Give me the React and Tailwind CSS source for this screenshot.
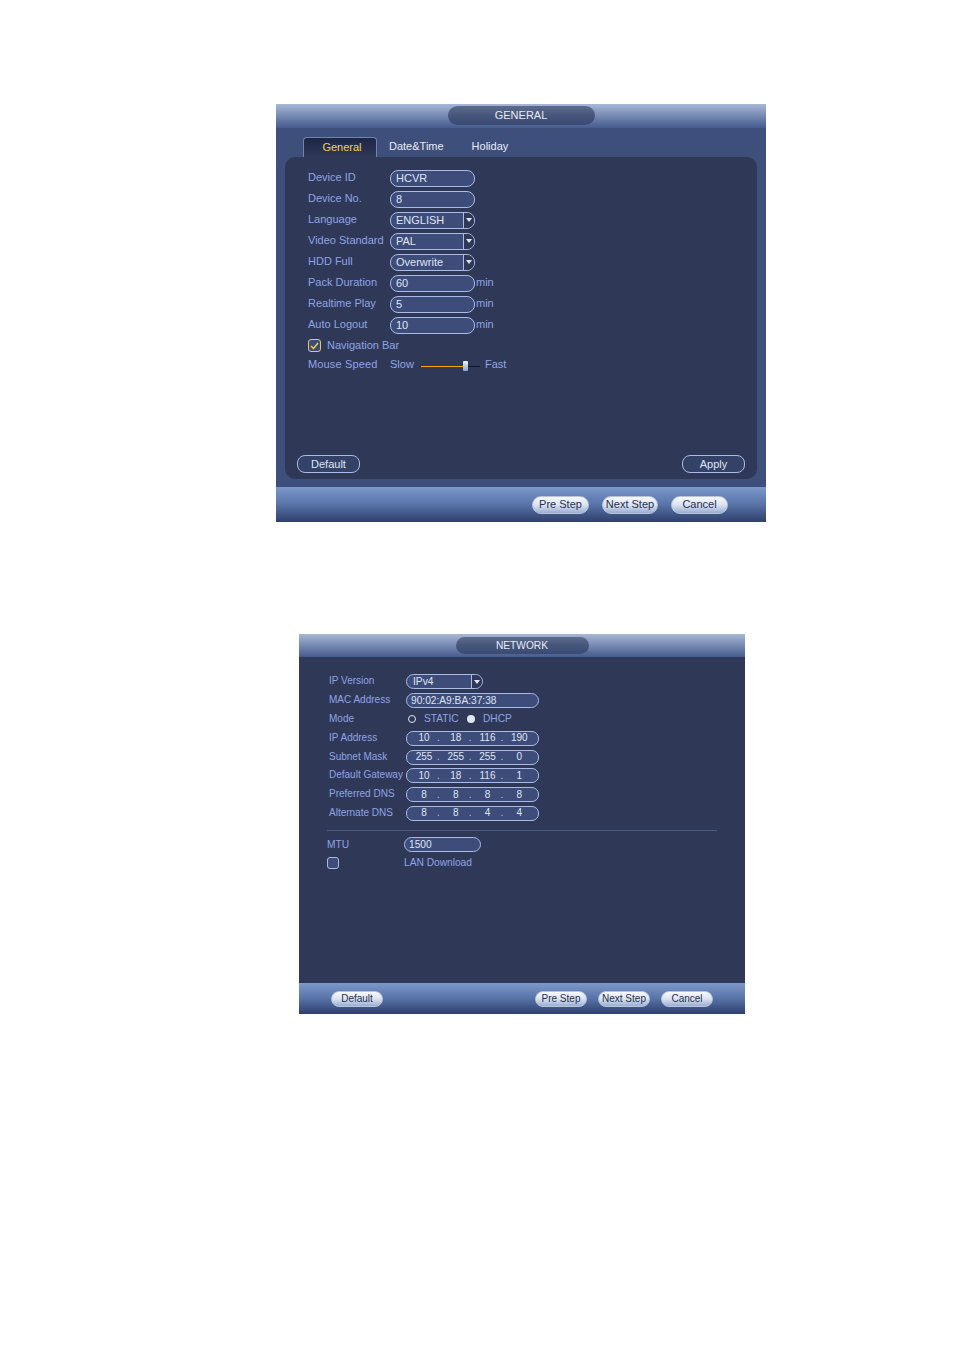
import React from "react";

const font = "font-['Liberation_Sans',Arial,sans-serif] text-[11px] leading-none";
const labelColor = "text-[#8fa3e6]";

// Rounded NVR style text box
const Input = ({ value, width = "w-[85px]", height = "h-[17px]", pad = "pl-[4px]", shift = "mt-[1px]" }) => (
  <div className={`${width} ${height} ${pad} ${shift} flex items-center rounded-[8px] border border-[#a9bbe6] bg-[#3e4c7a] text-[#dfe5f5]`}>
    {value}
  </div>
);

const Select = ({ value, width = "w-[85px]", height = "h-[17px]", pad = "pl-[4px]", shift = "mt-[1px]" }) => (
  <div className={`${width} ${height} ${shift} flex items-center overflow-hidden rounded-[8px] border border-[#a9bbe6] bg-[#3e4c7a] text-[#dfe5f5]`}>
    <span className={`flex-1 ${pad}`}>{value}</span>
    <span className="flex h-full w-[11px] items-center justify-center border-l border-[#a9bbe6] bg-[#2f3957]">
      <svg width="6" height="4" viewBox="0 0 6 4"><path d="M0 0h6L3 4z" fill="#dfe5f5" /></svg>
    </span>
  </div>
);

const IpInput = ({ parts }) => (
  <div className="mt-[1px] flex h-[15px] w-[133px] items-center rounded-[7px] border border-[#a9bbe6] bg-[#3e4c7a] pl-[4px] text-[10px] text-[#dfe5f5]">
    {parts.map((p, i) => (
      <div key={i} className="flex w-[32px] items-center">
        <span className="w-[26px] text-center">{p}</span>
        {i < 3 && <span className="w-[2px] text-center text-[#b9c4e2]">.</span>}
      </div>
    ))}
  </div>
);

const GlossButton = ({ label, width, height = "h-[18px]", size = "text-[11px]" }) => (
  <button className={`${width} ${height} ${size} rounded-full border border-[#b8c4de] bg-gradient-to-b from-[#f8f9fd] via-[#dbe2f0] to-[#9aaed2] text-[#26304f]`}>
    {label}
  </button>
);

const OutlineButton = ({ label }) => (
  <button className="h-[18px] w-[63px] rounded-[8px] border border-[#a9bbe6] bg-[#354268] text-[#dfe5f5]">
    {label}
  </button>
);

const Row = ({ label, children, unit }) => (
  <div className="flex h-[21px] items-center">
    <span className={`w-[82px] ${labelColor}`}>{label}</span>
    {children}
    {unit && <span className={`ml-[1px] ${labelColor}`}>{unit}</span>}
  </div>
);

const NetRow = ({ label, children }) => (
  <div className="flex h-[18.8px] items-center">
    <span className={`w-[77px] whitespace-nowrap text-[10px] ${labelColor}`}>{label}</span>
    {children}
  </div>
);

const TitleBar = ({ title, pillSize, height, top, size }) => (
  <div className={`${height} ${top} flex items-start justify-center bg-gradient-to-b from-[#a8b8d6] to-[#465c8e]`}>
    <div className={`${pillSize} ${size} flex items-center justify-center rounded-full bg-gradient-to-b from-[#5e6c8c] via-[#46557a] to-[#3a4a72] text-[#e6ebf7]`}>
      {title}
    </div>
  </div>
);

const GeneralWindow = () => (
  <div className="ml-[276px] flex h-[418px] w-[490px] flex-col bg-[#3f4f7c]">
    <TitleBar title="GENERAL" pillSize="h-[19px] w-[147px]" height="h-[24px]" top="pt-[2px]" size="text-[11px]" />
    {/* Tabs */}
    <div className="flex h-[29px] items-end pl-[27px]">
      <div className="flex h-[20px] w-[74px] items-center justify-center rounded-t-[4px] border border-b-0 border-[#6f82b0] bg-gradient-to-b from-[#1d2745] to-[#2f3957] pl-[4px] text-[#f3d24a]">
        General
      </div>
      <span className="ml-[12px] mb-[5px] text-[#e6ebf7]">Date&amp;Time</span>
      <span className="ml-[28px] mb-[5px] text-[#e6ebf7]">Holiday</span>
    </div>
    {/* Panel */}
    <div className="mx-[9px] flex h-[322px] flex-col rounded-[10px] bg-[#2f3957] px-[12px] pt-[10px] pb-[6px]">
      <div className="pl-[11px]">
        <Row label="Device ID"><Input value="HCVR" pad="pl-[5px]" /></Row>
        <Row label="Device No."><Input value="8" pad="pl-[5px]" /></Row>
        <Row label="Language"><Select value="ENGLISH" pad="pl-[5px]" /></Row>
        <Row label="Video Standard"><Select value="PAL" pad="pl-[5px]" /></Row>
        <Row label="HDD Full"><Select value="Overwrite" pad="pl-[5px]" /></Row>
        <Row label="Pack Duration" unit="min"><Input value="60" pad="pl-[5px]" /></Row>
        <Row label="Realtime Play" unit="min"><Input value="5" pad="pl-[5px]" /></Row>
        <Row label="Auto Logout" unit="min"><Input value="10" pad="pl-[5px]" /></Row>
        <div className="flex h-[21px] items-center">
          <span className="flex h-[13px] w-[13px] items-center justify-center rounded-[3px] border border-[#e6c860] bg-[#3e4c7a]">
            <svg width="9" height="8" viewBox="0 0 9 8"><path d="M1 4l2.5 2.5L8 1" fill="none" stroke="#f3d24a" strokeWidth="1.5" /></svg>
          </span>
          <span className={`ml-[6px] ${labelColor}`}>Navigation Bar</span>
        </div>
        <div className="flex h-[17px] items-center">
          <span className={`w-[82px] tracking-[0.15px] ${labelColor}`}>Mouse Speed</span>
          <span className={`w-[31px] ${labelColor}`}>Slow</span>
          <div className="mt-[3px] flex w-[59px] items-center">
            <span className="h-[1px] w-[42px] bg-[#f5a800]" />
            <span className="h-[10px] w-[5px] rounded-[1px] bg-gradient-to-b from-[#f0f3fa] to-[#8fa3cc]" />
            <span className="h-[1px] w-[12px] bg-[#11162a]" />
          </div>
          <span className={`ml-[5px] ${labelColor}`}>Fast</span>
        </div>
      </div>
      <div className="mt-auto flex justify-between">
        <OutlineButton label="Default" />
        <OutlineButton label="Apply" />
      </div>
    </div>
    {/* Footer */}
    <div className="mt-[8px] flex h-[35px] items-center justify-end gap-[13px] bg-gradient-to-b from-[#7d98c9] via-[#5873a8] to-[#2f3f6c] pr-[38px]">
      <GlossButton label="Pre Step" width="w-[57px]" />
      <GlossButton label="Next Step" width="w-[56px]" />
      <GlossButton label="Cancel" width="w-[57px]" />
    </div>
  </div>
);

const NetworkWindow = () => (
  <div className="ml-[299px] mt-[112px] flex h-[380px] w-[446px] flex-col bg-[#2f3957] text-[10.2px]">
    <TitleBar title="NETWORK" pillSize="h-[17px] w-[133px] pt-[1px]" height="h-[23px]" top="pt-[3px]" size="text-[10.2px]" />
    <div className="flex-1 pt-[15px]">
      <div className="pl-[30px]">
        <NetRow label="IP Version"><Select value="IPv4" width="w-[77px]" height="h-[15px]" pad="pl-[6px]" /></NetRow>
        <NetRow label="MAC Address"><Input value="90:02:A9:BA:37:38" width="w-[133px]" height="h-[15px]" /></NetRow>
        <NetRow label="Mode">
          <span className="ml-[2px] h-[8px] w-[8px] rounded-full border border-[#dfe5f5]" />
          <span className={`ml-[8px] w-[36px] ${labelColor}`}>STATIC</span>
          <span className="ml-[7px] h-[8px] w-[8px] rounded-full bg-[#dfe5f5]" />
          <span className={`ml-[8px] ${labelColor}`}>DHCP</span>
        </NetRow>
        <NetRow label="IP Address"><IpInput parts={["10", "18", "116", "190"]} /></NetRow>
        <NetRow label="Subnet Mask"><IpInput parts={["255", "255", "255", "0"]} /></NetRow>
        <NetRow label="Default Gateway"><IpInput parts={["10", "18", "116", "1"]} /></NetRow>
        <NetRow label="Preferred DNS"><IpInput parts={["8", "8", "8", "8"]} /></NetRow>
        <NetRow label="Alternate DNS"><IpInput parts={["8", "8", "4", "4"]} /></NetRow>
      </div>
      <div className="mx-[28px] mt-[8px] h-[1px] bg-[#4c5a82]" />
      <div className="mt-[6px] flex h-[15px] items-center pl-[28px]">
        <span className={`w-[77px] ${labelColor}`}>MTU</span>
        <Input value="1500" width="w-[77px]" height="h-[15px]" shift="mt-0" />
      </div>
      <div className="mt-[3px] flex h-[15px] items-center pl-[28px]">
        <span className="mr-[65px] h-[12px] w-[12px] rounded-[3px] border border-[#a9bbe6] bg-[#3e4c7a]" />
        <span className={labelColor}>LAN Download</span>
      </div>
    </div>
    <div className="flex h-[31px] items-center bg-gradient-to-b from-[#7d98c9] via-[#5873a8] to-[#2f3f6c] pl-[32px]">
      <GlossButton label="Default" width="w-[52px]" height="h-[16px]" size="text-[10px]" />
      <div className="ml-auto mr-[32px] flex gap-[11px]">
        <GlossButton label="Pre Step" width="w-[52px]" height="h-[16px]" size="text-[10px]" />
        <GlossButton label="Next Step" width="w-[52px]" height="h-[16px]" size="text-[10px]" />
        <GlossButton label="Cancel" width="w-[52px]" height="h-[16px]" size="text-[10px]" />
      </div>
    </div>
  </div>
);

export default function App() {
  return (
    <div className={`h-[1350px] w-[954px] overflow-hidden bg-white pt-[104px] ${font}`}>
      <GeneralWindow />
      <NetworkWindow />
    </div>
  );
}
